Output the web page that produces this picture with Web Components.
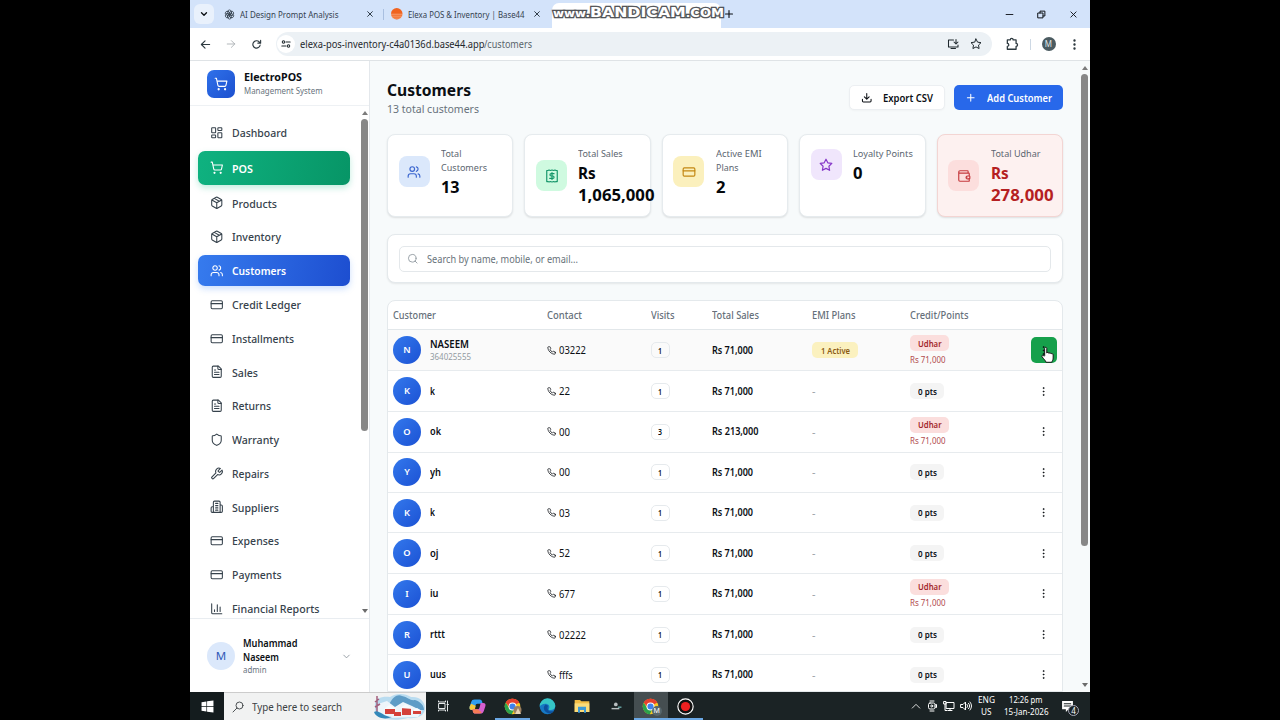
<!DOCTYPE html>
<html lang="en">
<head>
<meta charset="utf-8">
<title>Customers</title>
<style>
html,body{margin:0;height:100%;background:#000;overflow:hidden}
body{display:flex;justify-content:center;font-family:"Noto Sans","Open Sans",sans-serif;color:#0b0f14}
</style>
</head>
<body>
<desktop-screen></desktop-screen>
<script>
const define=(name,render,after)=>customElements.define(name,class extends HTMLElement{
  connectedCallback(){
    if(this.shadowRoot)return;
    this.attachShadow({mode:'open'}).innerHTML=render(this);
    if(after)after(this);
  }
});
const a=(el,n,d='')=>el.getAttribute(n)??d;

/* Text set to an exact advance width */
define('fit-text',el=>`<style>:host{display:inline-block;white-space:nowrap;width:${a(el,'w')}px;flex:none}
span{display:inline-block;transform-origin:0 50%}</style><span><slot></slot></span>`,el=>{
  const s=el.shadowRoot.querySelector('span');
  const n=s.getBoundingClientRect().width;
  if(n)s.style.transform=`scaleX(${parseFloat(a(el,'w'))/n})`;
});
const T=(w,t)=>`<fit-text w="${w}">${t}</fit-text>`;

const CARD='<rect width="20" height="14" x="2" y="5" rx="2"/><path d="M2 10h20"/>';
const FILE='<path d="M15 2H6a2 2 0 0 0-2 2v16a2 2 0 0 0 2 2h12a2 2 0 0 0 2-2V7Z"/><path d="M14 2v4a2 2 0 0 0 2 2h4M10 9H8M16 13H8M16 17H8"/>';
const BOX='<path d="m7.5 4.27 9 5.15M21 8a2 2 0 0 0-1-1.73l-7-4a2 2 0 0 0-2 0l-7 4A2 2 0 0 0 3 8v8a2 2 0 0 0 1 1.73l7 4a2 2 0 0 0 2 0l7-4A2 2 0 0 0 21 16ZM3.3 7l8.7 5 8.7-5M12 22V12"/>';
const ICONS={
 dashboard:'<rect width="7" height="9" x="3" y="3" rx="1"/><rect width="7" height="5" x="14" y="3" rx="1"/><rect width="7" height="9" x="14" y="12" rx="1"/><rect width="7" height="5" x="3" y="16" rx="1"/>',
 cart:'<circle cx="8" cy="21" r="1"/><circle cx="19" cy="21" r="1"/><path d="M2.05 2.05h2l2.66 12.42a2 2 0 0 0 2 1.58h9.78a2 2 0 0 0 1.95-1.57l1.65-7.43H5.12"/>',
 box:BOX,card:CARD,file:FILE,
 users:'<path d="M16 21v-2a4 4 0 0 0-4-4H6a4 4 0 0 0-4 4v2"/><circle cx="9" cy="7" r="4"/><path d="M22 21v-2a4 4 0 0 0-3-3.870M16 3.130a4 4 0 0 1 0 7.750"/>',
 shield:'<path d="M20 13c0 5-3.5 7.5-7.66 8.95a1 1 0 0 1-.67-.01C7.5 20.5 4 18 4 13V6a1 1 0 0 1 1-1c2 0 4.5-1.2 6.24-2.72a1.17 1.17 0 0 1 1.52 0C14.51 3.81 17 5 19 5a1 1 0 0 1 1 1z"/>',
 wrench:'<path d="M14.7 6.3a1 1 0 0 0 0 1.4l1.6 1.6a1 1 0 0 0 1.4 0l3.77-3.77a6 6 0 0 1-7.94 7.94l-6.91 6.91a2.12 2.12 0 0 1-3-3l6.91-6.91a6 6 0 0 1 7.94-7.94l-3.76 3.76z"/>',
 building:'<path d="M6 22V4a2 2 0 0 1 2-2h8a2 2 0 0 1 2 2v18ZM6 12H4a2 2 0 0 0-2 2v6a2 2 0 0 0 2 2h2M18 9h2a2 2 0 0 1 2 2v9a2 2 0 0 1-2 2h-2M10 6h4M10 10h4M10 14h4M10 18h4"/>',
 chart:'<path d="M3 3v16a2 2 0 0 0 2 2h16M18 17V9M13 17V5M8 17v-3"/>',
 down:'<path d="m6 9 6 6 6-6"/>',up:'<path d="m3 17 9-9 9 9"/>',
 download:'<path d="M21 15v4a2 2 0 0 1-2 2H5a2 2 0 0 1-2-2v-4M7 10l5 5 5-5M12 15V3"/>',
 plus:'<path d="M5 12h14M12 5v14"/>',
 close:'<path d="M5 5l14 14M19 5 5 19"/>',
 receipt:'<path d="M3 2.5h2l2-.8 2 .8 3-.8 3 .8 2-.8 2 .8h2v19h-2l-2 .8-2-.8-3 .8-3-.8-2 .8-2-.8H3z"/><path d="M15.5 8h-5a2 2 0 1 0 0 4h3a2 2 0 1 1 0 4H8M12 6v12"/>',
 star:'<path d="M12 2l3.1 6.3 6.9 1-5 4.9 1.2 6.9L12 17.8l-6.2 3.3L7 14.2 2 9.3l6.9-1z"/>',
 wallet:'<path d="M17 14h.01M19 7V4a1 1 0 0 0-1-1H5a2 2 0 0 0 0 4h15a1 1 0 0 1 1 1v4h-3a2 2 0 0 0 0 5h3a1 1 0 0 0 1-1v-3a1 1 0 0 0-1-1M3 5v14a2 2 0 0 0 2 2h15a1 1 0 0 0 1-1v-4"/>',
 search:'<circle cx="11" cy="11" r="8"/><path d="m21 21-4.3-4.3"/>',
 winsearch:'<circle cx="15" cy="9" r="7"/><path d="M10 14 2 22"/>',
 phone:'<path d="M22 16.92v3a2 2 0 0 1-2.18 2 19.79 19.79 0 0 1-8.63-3.07 19.5 19.5 0 0 1-6-6 19.79 19.79 0 0 1-3.07-8.67A2 2 0 0 1 4.11 2h3a2 2 0 0 1 2 1.72c.13.96.36 1.9.7 2.81a2 2 0 0 1-.45 2.11L8.09 9.91a16 16 0 0 0 6 6l1.27-1.27a2 2 0 0 1 2.11-.45c.9.34 1.85.57 2.81.7A2 2 0 0 1 22 16.92z"/>',
 dots:'<g fill="currentColor"><circle cx="12" cy="4.5" r="1.2"/><circle cx="12" cy="12" r="1.2"/><circle cx="12" cy="19.5" r="1.2"/></g>',
 back:'<path d="M21 12H3M11 4l-8 8 8 8"/>',fwd:'<path d="M3 12h18M13 4l8 8-8 8"/>',
 reload:'<path d="M20 13a8 8 0 1 1-2-6.5L20.500 9M21 3v6h-6"/>',
 tune:'<circle cx="6" cy="7" r="3"/><path d="M12 7h10M2 17h10"/><circle cx="18" cy="17" r="3"/>',
 install:'<path d="M13 4H3v14h19v-4M8 21h9M18 3v8M14 8l4 4 4-4"/>',
 puzzle:'<path d="M4 5h5a2.500 2.500 0 0 1 5 0h5v6a2.500 2.500 0 0 1 0 5v5H4v-5a2.500 2.500 0 0 0 0-5z"/>',
 min:'<path d="M3 12h18"/>',
 restore:'<path d="M3 8h13v13H3zM8 8V3h13v13h-5"/>',
 openai:'<g><ellipse cx="12" cy="7.500" rx="4.500" ry="5.500"/><ellipse cx="12" cy="7.500" rx="4.500" ry="5.500" transform="rotate(60 12 12)"/><ellipse cx="12" cy="7.500" rx="4.500" ry="5.500" transform="rotate(120 12 12)"/><ellipse cx="12" cy="7.500" rx="4.500" ry="5.500" transform="rotate(180 12 12)"/><ellipse cx="12" cy="7.500" rx="4.500" ry="5.500" transform="rotate(240 12 12)"/><ellipse cx="12" cy="7.500" rx="4.500" ry="5.500" transform="rotate(300 12 12)"/></g>',
 base:'<g stroke="none"><circle cx="12" cy="12" r="12" fill="#f0631f"/><path d="M0 13h24M1 17h22M3 21h18" stroke="#fbc7a5" stroke-width="1.300"/></g>',
 windows:'<path stroke="none" fill="#fff" d="M1 4l9-1.300v8.800H1zM11.200 2.500 23 1v10.500H11.200zM1 12.700h9v8.600L1 20zM11.200 12.700H23V23l-11.800-1.500z"/>',
 taskview:'<path d="M4 7h12v10H4zM3 2v2h14V2M3 22v-2h14v2M21 2v5M21 11v11M20 9h3"/>',
 copilot:'<g stroke="none"><path d="M8 2h7c2 0 3 1 3.500 3l.8 3H12c-2 0-2.500 1-3 3l-1.500 6H4c-3 0-4-2-3-5l2-6c1-3 2-4 5-4z" fill="#2f9df0"/><path d="M3 8 1 12c-1 3 0 5 3 5h4l1.500-6z" fill="#f3c83e"/><path d="M16 22H9c-2 0-3-1-3.500-3L5 16h7c2 0 2.500-1 3-3l1.500-6H20c3 0 4 2 3 5l-2 6c-1 3-2 4-5 4z" fill="#d65fd0"/><path d="M16 22H9c-2 0-3-1-3.500-3L5 16h7l6 4z" fill="#f57c55"/></g>',
 chrome:'<g stroke="none"><circle cx="12" cy="12" r="11" fill="#f9c623"/><path d="M12 12 2.500 6.500A11 11 0 0 1 21.500 6.500z" fill="#e5402f"/><path d="M2.500 6.500A11 11 0 0 0 11 23l4-8-8-1z" fill="#2ca24c"/><path d="M12 6.500h9.500a11 11 0 0 0-19 0L7 12z" fill="#e5402f"/><circle cx="12" cy="12" r="5.600" fill="#fff"/><circle cx="12" cy="12" r="4.300" fill="#3f82ee"/></g>',
 edge:'<g stroke="none"><circle cx="12" cy="12" r="11" fill="#1779c4"/><path d="M1 12A11 11 0 0 1 23 11c0 4-3 6-7 6-2 0-3-1-2-2 2-4-1-7-5-7-4 0-7 2-8 4z" fill="#36c5c6"/><path d="M9 9c-5 5-1 12 7 13a11 11 0 0 0 5-4c-5 2-9 0-9-4 0-2 1-3 1-3z" fill="#0d4f9c"/></g>',
 folder:'<g stroke="none"><path d="M1 3h8l2 2h12v16H1z" fill="#f2bd45"/><path d="M1 8h22v13H1z" fill="#fbdc7a"/><path d="M6 13h12v9h-3v-4H9v4H6z" fill="#3d9ad6"/></g>',
 tiny:'<g stroke="none" fill="#b9bfc1"><circle cx="11" cy="9" r="2.600"/><path d="M5 14h11v2H5z"/><path d="M14 12h5v2h-5z" fill="#67a4a3"/></g>',
 record:'<g><circle cx="12" cy="12" r="10.800" fill="#111" stroke="#fff" stroke-width="1.600"/><circle cx="12" cy="12" r="6.500" fill="#ee2020" stroke="none"/></g>',
 sync:'<path d="M8 2h8M8 22h8"/><rect x="5" y="6" width="13" height="12" rx="3"/><circle cx="11.500" cy="12" r="2"/><path d="M18 10l3-1v6l-3-1"/>',
 net:'<path d="M7 5h15v12H7zM14 17v4M10 21h8M2 3h4v5H2zM4 8v13h4"/>',
 sound:'<path d="M2 9h4l5-5v16l-5-5H2zM14 9c1.500 2 1.500 4 0 6M17 6.500c3 3 3 8 0 11M20 4c4 5 4 11 0 16"/>',
 note:'<path stroke="none" fill="#fff" d="M2 2h20v15h-8l-5 5v-5H2z"/><path d="M6 7h12M6 11h12" stroke="#1b2325"/>',
 hand:'<path fill="#fff" stroke="#111" stroke-width="1.400" d="M8 13V3.500C8 1.300 11 1.300 11 3.500V10c.5-1.500 3-1.200 3 .5.600-1.300 3-1 3 .7.700-1 3-.7 3 1.300V17c0 3-1.500 4-2 6H10c-.6-2-3.500-5-5.500-7.500C3 13.300 5.500 12 7 14z"/>'
};
define('ui-icon',el=>{const s=a(el,'size','13');return `<style>:host{display:block;flex:none;width:${s}px;height:${s}px}svg{display:block}</style>
<svg width="${s}" height="${s}" viewBox="0 0 24 24" fill="none" stroke="currentColor" stroke-width="${a(el,'sw','2')}" stroke-linecap="round" stroke-linejoin="round">${ICONS[a(el,'name')]}</svg>`});
const I=(n,s,sw=2)=>`<ui-icon name="${n}" size="${s}" sw="${sw}"></ui-icon>`;

define('scroll-bar',el=>`<style>:host{display:flex;flex-direction:column;align-items:center;flex:none;width:9px;box-sizing:border-box}
i{width:0;height:0;border:3.500px solid transparent}.u{border-top:0;border-bottom:4px solid #7b7b7b}.d{border-bottom:0;border-top:4px solid #6b6b6b}
b{width:6.500px;height:${a(el,'thumb')}px;margin:4px 0 auto;border-radius:4px;background:#878787}</style><i class="u"></i><b></b><i class="d"></i>`);

/* Browser chrome */
define('browser-tab',el=>`<style>:host{display:flex;align-items:center;height:28px;font-size:9.700px;color:#35424f;box-sizing:border-box;width:${a(el,'width')}px}
.x{margin-left:auto;color:#26323d}.t{margin-left:${a(el,'gap')}px}</style>${I(a(el,'icon'),a(el,'isize'),1.7)}<span class="t"><slot></slot></span><span class="x">${I('close',8,2.8)}</span>`);
define('browser-chrome',()=>`<style>:host{display:block;flex:none;position:relative}
.tabs{height:28px;background:#d3e3fa;display:flex;align-items:center;padding-left:4px}
.drop{width:20px;height:20px;border-radius:6px;background:#e9f1fc;display:grid;place-items:center;margin-right:9.500px}
.sep{width:1px;height:11px;background:#a9bfe0;margin:0 8px 0 9.500px}
.active{width:169px;height:25px;background:#fff;border-radius:7px 7px 0 0;align-self:flex-end;margin-left:11px}
.new{margin-left:2px}.win{margin-left:auto;display:flex;gap:23px;padding-right:12px;align-items:center}
.bar{height:32px;background:#fff;display:flex;align-items:center;padding:0 9px 0 10px;color:#2e3a40;border-bottom:1px solid #dfe3e6;border-top-left-radius:6px}
.pill{display:flex;flex:none;align-items:center;box-sizing:border-box;height:24px;width:716px;border-radius:12px;background:#ecf1f5;margin-left:14px;padding:0 10px 0 1.500px;font-size:10.600px;color:#1f282d}
.site{width:18px;height:18px;border-radius:9px;background:#fff;display:grid;place-items:center;margin-right:4.500px}
.path{color:#59646b}.r{margin-left:auto;display:flex;gap:11px}
.me{width:14px;height:14px;border-radius:50%;background:#4b5b61;color:#dfe6e8;font-size:8px;line-height:14px;text-align:center;margin-left:11px}
.v{width:1px;height:11px;background:#cdd8e4;margin-left:11px}
.mark{position:absolute;left:363px;top:2.500px;font:bold 11px/18px "DejaVu Sans",sans-serif;color:#fff;-webkit-text-stroke:2.500px #4c4f54;paint-order:stroke fill;text-shadow:0 0 2px #777}
.mark b{font-size:14.500px}
</style>
<div class="tabs"><div class="drop">${I('down',10,3.2)}</div>
<browser-tab width="150" icon="openai" isize="11" gap="5.500">${T(98.5,'AI Design Prompt Analysis')}</browser-tab><div class="sep"></div>
<browser-tab width="150" icon="base" isize="11.500" gap="5" style="margin-left:-1px">${T(116.5,'Elexa POS &amp; Inventory | Base44')}</browser-tab>
<div class="active"></div><div class="new">${I('plus',12,2.2)}</div>
<div class="win">${I('min',9,2.4)}${I('restore',9,2.6)}${I('close',9,2.4)}</div></div>
<div class="bar">${I('back',11,2.5)}<span style="color:#a3a9ad;margin-left:15px">${I('fwd',10,2)}</span><span style="margin-left:14.500px">${I('reload',11,2.5)}</span>
<div class="pill"><div class="site">${I('tune',10,2.5)}</div>${T(184.5,'elexa-pos-inventory-c4a0136d.base44.app')}<span class="path">${T(48,'/customers')}</span><div class="r">${I('install',12,2.1)}${I('star',12,2)}</div></div>
<span style="margin-left:13px">${I('puzzle',14,2.2)}</span><div class="v"></div><div class="me">M</div><span style="margin-left:auto">${I('dots',13,2)}</span></div>
<div class="mark">${T(171,'www.<b>BANDICAM</b>.<span style="font-size:12px">COM</span>')}</div>`);

/* Sidebar */
define('nav-item',el=>{const k=a(el,'kind');return `<style>:host{display:flex;align-items:center;flex:none;box-sizing:border-box;width:152px;height:${k=='pos'?33.8:31}px;padding-left:12px;border-radius:7px;font-size:11.300px;font-weight:500;color:#36424c;
${k=='pos'?'background:linear-gradient(100deg,#0fb280,#079566);color:#fff;font-weight:600;box-shadow:0 3px 6px #10b98140':k=='on'?'background:linear-gradient(100deg,#367bee,#1d4ed0);color:#fff;font-weight:600;box-shadow:0 3px 6px #3b82f640':''}}
fit-text{margin-left:8.500px}</style>${I(a(el,'icon'),13.5,1.9)}${T(a(el,'w'),a(el,'label'))}`});
const NAV=[['dashboard','Dashboard',55],['cart','POS',21,'pos'],['box','Products',45],['box','Inventory',49],['users','Customers',54,'on'],['card','Credit Ledger',69],['card','Installments',62],['file','Sales',26],['file','Returns',39],['shield','Warranty',47],['wrench','Repairs',37],['building','Suppliers',47],['card','Expenses',47],['card','Payments',49.5],['chart','Financial Reports',87.5]];
define('side-bar',()=>`<style>:host{display:flex;flex-direction:column;flex:none;width:180px;box-sizing:border-box;border-right:1px solid #e4e8ec;background:#fff}
.head{height:45px;flex:none;box-sizing:border-box;display:flex;align-items:center;padding:1.500px 0 0 17px;gap:8.500px;border-bottom:1px solid #eef1f4}
.logo{width:28px;height:28px;border-radius:7px;background:linear-gradient(135deg,#2f71ea,#1c50cf);color:#fff;display:grid;place-items:center}
.two{display:flex;flex-direction:column}.n{font-size:10.900px;font-weight:700;line-height:15px}.s{font-size:8.800px;line-height:13px;color:#68737d}
.head .s{padding-top:1px}
.mid{display:flex;flex:none;height:512px;overflow:hidden;justify-content:space-between}
nav{display:flex;flex-direction:column;gap:2.780px;padding:11.400px 0 0 8px}
scroll-bar{padding:5px 0 5px}
.foot{flex:1;border-top:1px solid #e9edf1;display:flex;align-items:center;padding:1px 17px 0}
.av{width:28px;height:28px;border-radius:50%;background:#dbe8fb;color:#3059b8;font-size:11.500px;line-height:28px;text-align:center;margin-right:8px}
.foot .n{font-size:10.600px;font-weight:600;line-height:14px}
</style><div class="head"><div class="logo">${I('cart',14,1.9)}</div><div class="two"><div class="n">${T(58,'ElectroPOS')}</div><div class="s">${T(78.5,'Management System')}</div></div></div>
<div class="mid"><nav>${NAV.map(([i,l,w,k=''])=>`<nav-item icon="${i}" label="${l}" w="${w}" kind="${k}"></nav-item>`).join('')}</nav><scroll-bar thumb="312"></scroll-bar></div>
<div class="foot"><div class="av">M</div><div class="two"><div class="n">${T(54.5,'Muhammad')}</div><div class="n">${T(36,'Naseem')}</div><div class="s">${T(23.5,'admin')}</div></div><span style="margin-left:auto;color:#858e96">${I('down',11,1.8)}</span></div>`);

/* Main area */
define('action-button',el=>`<style>:host{display:flex;align-items:center;box-sizing:border-box;height:25.500px;border-radius:5px;font-size:10.200px;font-weight:600;padding-left:11px;width:${a(el,'width')}px;
${el.hasAttribute('primary')?'background:#2868ea;color:#fff;':'background:#fff;border:1px solid #eceff2;box-shadow:0 1px 2px #00000008;'}}span{margin-left:10.500px}</style>${I(a(el,'icon'),11.5,2.2)}<span><slot></slot></span>`);
define('stat-card',el=>{const[c,b]={blue:['#3b66cf','#dbe8fb'],green:['#15966a','#cffae0'],yellow:['#c38712','#fbf0bd'],purple:['#8535c8','#f0e6fc'],red:['#c53a3e','#fcdedd']}[a(el,'tone')];const red=a(el,'tone')=='red';
return `<style>:host{display:flex;align-items:flex-start;box-sizing:border-box;height:83.300px;min-width:0;padding:11.300px 0 0 10.600px;border:1px solid ${red?'#f3d5d3':'#e6ebee'};border-radius:8px;background:${red?'#fdf1f0':'#fff'};box-shadow:0 1px 2px #0000001c}
.in{display:flex;align-items:center;gap:11.400px}.ic{width:31px;height:31px;border-radius:8px;display:grid;place-items:center;background:${b};color:${c}}
.l{font-size:9.800px;line-height:14px;color:#5c6670;position:relative;top:.6px}.v{font-size:16.200px;line-height:22px;font-weight:700;color:${red?'#b51f22':'#05080b'}}
.l,.v{display:flex}.vs{margin-top:1.600px}</style>
<div class="in"><div class="ic">${I(a(el,'icon'),14,2)}</div><div>${JSON.parse(a(el,'labels')).map(([t,w])=>`<div class="l">${T(w,t)}</div>`).join('')}<div class="vs">${JSON.parse(a(el,'values')).map(([t,w])=>`<div class="v">${T(w,t)}</div>`).join('')}</div></div></div>`});
const S=(tone,icon,l,v)=>`<stat-card tone="${tone}" icon="${icon}" labels='${JSON.stringify(l)}' values='${JSON.stringify(v)}'></stat-card>`;

define('customer-row',el=>{const r=ROWS[+a(el,'row')],hot=a(el,'row')=='0';
return `<style>:host{display:grid;grid-template-columns:154px 104px 60.500px 100.800px 97.800px 121px 1fr;align-items:center;box-sizing:border-box;height:${r.u?41:40.35}px;padding:.6px 0 0 5px;border-bottom:1px solid #e7ebee;background:${hot?'#fafafa':'#fff'};font-size:10.200px}
.c{display:flex;align-items:center}.av{width:28px;height:28px;border-radius:50%;background:linear-gradient(135deg,#3378ec,#1c52d4);color:#fff;font-size:9.300px;font-weight:600;line-height:28.500px;text-align:center;margin-right:9px}
.n{font-weight:600;line-height:13px;display:flex}.s{font-size:8.700px;line-height:12px;color:#939ba2;display:flex}
.p{margin-left:3px}.b{box-sizing:border-box;display:inline-flex;align-items:center;justify-content:center;height:16px;border-radius:5px;font-size:9px;font-weight:600}
.v{width:18.500px;border:1px solid #e6eaed}.act{width:46px;background:#fbf1bf;color:#8a5a12}.ud{width:39px;background:#fbdedd;color:#a3272c}.pt{width:34px;background:#f4f4f4}
.o{font-size:9px;line-height:13px;color:#b14a4d;display:flex;padding-top:1.500px}
.d{color:#9aa1a6}.btn{position:relative;width:25.500px;height:26px;border-radius:5px;display:grid;place-items:center;${hot?'background:#16a04b':''}}
.hand{position:absolute;left:8px;top:9px}.k{display:flex;flex-direction:column;align-items:flex-start}</style>
<div class="c"><div class="av">${r.n[0].toUpperCase()}</div><div><div class="n">${T(r.w,r.n)}</div>${hot?`<div class="s">${T(41,'364025555')}</div>`:''}</div></div>
<div class="c">${I('phone',9,2)}<span class="p">${T(r.pw,r.p)}</span></div>
<div class="c"><div class="b v">${T(4,r.v||'1')}</div></div>
<div class="n">${T(r.sw||41,r.s||'Rs 71,000')}</div>
<div class="c">${hot?`<div class="b act">${T(29,'1 Active')}</div>`:`<span class="d">${T(3.5,'-')}</span>`}</div>
<div class="k">${r.u?`<div class="b ud">${T(23.5,'Udhar')}</div><div class="o">${T(35.5,'Rs 71,000')}</div>`:`<div class="b pt">${T(19,'0 pts')}</div>`}</div>
<div class="btn">${I('dots',11,1.2)}${hot?`<span class="hand">${I('hand',17)}</span>`:''}</div>`});
const ROWS=[{n:'NASEEM',w:39,p:'03222',pw:27,u:1},{n:'k',w:5,p:'22',pw:11},{n:'ok',w:11,p:'00',pw:11,u:1,v:'3',s:'Rs 213,000',sw:46.5},{n:'yh',w:11,p:'00',pw:11},{n:'k',w:5,p:'03',pw:11},{n:'oj',w:8.5,p:'52',pw:11},{n:'iu',w:8.5,p:'677',pw:16,u:1},{n:'rttt',w:15,p:'02222',pw:27},{n:'uus',w:16,p:'fffs',pw:13.5}];
define('customer-table',()=>`<style>:host{display:block;box-sizing:border-box;border:1px solid #e4e9ec;border-radius:8px 8px 0 0;background:#fff;overflow:hidden;height:400px}
.h{display:grid;grid-template-columns:154px 104px 60.500px 100.800px 97.800px 1fr;align-items:center;height:29px;box-sizing:border-box;padding-left:5px;border-bottom:1px solid #e2e7ea;font-size:10.200px;font-weight:500;color:#66707a}</style>
<div class="h">${[['Customer',43],['Contact',35],['Visits',23.5],['Total Sales',47],['EMI Plans',43.5],['Credit/Points',58.5]].map(([t,w])=>T(w,t)).join('')}</div>
${ROWS.map((_,i)=>`<customer-row row="${i}"></customer-row>`).join('')}`);
define('search-panel',()=>`<style>:host{display:block;box-sizing:border-box;height:49px;padding:10.500px 11px;background:#fff;border:1px solid #e4e9ec;border-radius:8px;box-shadow:0 1px 2px #00000014}
div{display:flex;align-items:center;height:26px;box-sizing:border-box;border:1px solid #e4e8eb;border-radius:5px;padding-left:7px;font-size:10.200px;color:#68727a;gap:8.500px}</style>
<div><span style="color:#8d969d">${I('search',11.5,1.8)}</span>${T(151,'Search by name, mobile, or email...')}</div>`);
define('customers-page',()=>`<style>:host{display:flex;flex:1;min-width:0;background:#f7fafb}
main{width:676px;padding:17px 0 0 17px;box-sizing:content-box;display:flex;flex-direction:column}
header{display:flex;align-items:center;height:40px;gap:9px}h1{margin:0;font-size:16.700px;line-height:22px;font-weight:700;padding-top:1px}.sub{font-size:10.900px;line-height:16px;color:#68727c}
.t{margin-right:auto}.cards{display:grid;grid-template-columns:repeat(5,minmax(0,1fr));gap:11.200px;margin-top:16.700px}
search-panel{margin-top:17.300px}customer-table{margin-top:16.700px}scroll-bar{margin-left:auto;padding:4.500px 0 5px;margin-right:1px}</style>
<main><header><div class="t"><h1>${T(84,'Customers')}</h1><div class="sub">${T(92,'13 total customers')}</div></div>
<action-button icon="download" width="95.500">${T(50,'Export CSV')}</action-button><action-button primary icon="plus" width="109.500">${T(65,'Add Customer')}</action-button></header>
<div class="cards">${S('blue','users',[['Total',20.5],['Customers',46]],[['13',18.5]])}${S('green','receipt',[['Total Sales',44.7]],[['Rs',17.7],['1,065,000',76.5]])}${S('yellow','card',[['Active EMI',45.7],['Plans',22.5]],[['2',9.5]])}${S('purple','star',[['Loyalty Points',59.8]],[['0',9.5]])}${S('red','wallet',[['Total Udhar',49.5]],[['Rs',17.7],['278,000',62.500]])}</div>
<search-panel></search-panel><customer-table></customer-table></main><scroll-bar thumb="472"></scroll-bar>`);

/* Windows taskbar */
define('task-button',el=>`<style>:host{display:grid;place-items:center;position:relative;width:34.600px;height:28px;box-sizing:border-box;color:#e8eced;${a(el,'state')=='on'?'background:#454e51;':''}${a(el,'state')?'box-shadow:inset 0 -2px #6ba8e5;':''}}
::slotted(*){position:absolute;left:18px;top:14px}</style>${I(a(el,'icon'),a(el,'size','17'),2)}<slot></slot>`);
define('task-bar',()=>`<style>:host{display:flex;flex:none;height:28px;background:#1b2325;color:#fff}
.start{width:34px;display:grid;place-items:center;background:#141c1e}
.search{width:202px;box-sizing:border-box;background:#f1f2f2;color:#3b4143;display:flex;align-items:center;padding-left:8px;font-size:11.200px;overflow:hidden;border-top:1px solid #ccc}
.m{width:10px;height:10px;border-radius:50%;background:#56666c;color:#fff;font-size:7px;line-height:10px;text-align:center}
.tray{margin-left:auto;display:flex;align-items:center;gap:5px;font-size:9px;line-height:12px}.tray>div{display:flex;flex-direction:column;align-items:center;margin-top:-1px}
.nt b{position:absolute;left:7px;top:5px;width:9px;height:9px;border-radius:50%;background:#1b2325;border:1px solid #aab;font-size:8px;line-height:9px;text-align:center;font-weight:400}
.nt{position:relative;width:17px;margin:0 12px 0 8px}</style>
<div class="start">${I('windows',13)}</div>
<div class="search">${I('winsearch',12,1.8)}<span style="margin-left:8px;margin-top:-1px">${T(90,'Type here to search')}</span>
<svg style="margin-left:auto" width="54" height="27" viewBox="0 0 54 27"><path d="M3 14C2 5 10 3 18 4 24 0 33 0 39 4c9-1 14 5 14 11 0 8-8 11-17 10-10 3-22 2-28-1-4-2-5-6-5-10z" fill="#b9dcf0"/><path d="M17 12c4-9 9-11 13-9 6 1 8 5 13 4 6 2 9 6 9 10H22z" fill="#5e9cc6"/><path d="M6 11l9-3 8 6 8-5 9 4 10 5-4 6-30 1-11-5z" fill="#edf5fa"/><path d="M13 16h10v5H13zM30 15h9v7h-9zM41 17h8v4h-8zM22 19h7v4h-7z" fill="#d4413a"/><path d="M12 16l5-4 8 4zM28 15l6-4 7 5zM40 18l5-3 5 3z" fill="#f8fbfd"/><path d="M5 3v18M3 9l4-3M3 14l5-3" stroke="#a2607d" stroke-width="1.500" fill="none"/><path d="M2 19c5-3 9 5 18 5-7 3-16 1-18-5z" fill="#3489ba"/></svg></div>
<task-button icon="taskview" size="12"></task-button><task-button icon="copilot"></task-button><task-button icon="chrome" state="run"><svg width="9" height="10" viewBox="0 0 9 10"><circle cx="4.500" cy="4" r="4" fill="#9d8062"/><path d="M2 8 5 2l3 6z" fill="#e7d4b5"/></svg></task-button><task-button icon="edge"></task-button><task-button icon="folder" size="16"></task-button><task-button icon="tiny"></task-button><task-button icon="chrome" state="on"><span class="m">M</span></task-button><task-button icon="record" state="run"></task-button>
<div class="tray">${I('up',10,2)}${I('sync',12,2)}${I('net',12,2)}${I('sound',12,2)}<div style="margin-left:1px">${T(17,'ENG')}${T(10.5,'US')}</div><div style="margin-left:4px">${T(33.5,'12:26 pm')}${T(44.5,'15-Jan-2026')}</div><span class="nt">${I('note',13,2)}<b>4</b></span></div>`);

define('desktop-screen',()=>`<style>:host{display:flex;flex-direction:column;width:900px;height:720px;background:#fff;overflow:hidden}
.w{display:flex;flex:1;min-height:0;overflow:hidden}</style><browser-chrome></browser-chrome><div class="w"><side-bar></side-bar><customers-page></customers-page></div><task-bar></task-bar>`);
</script>
</body>
</html>
